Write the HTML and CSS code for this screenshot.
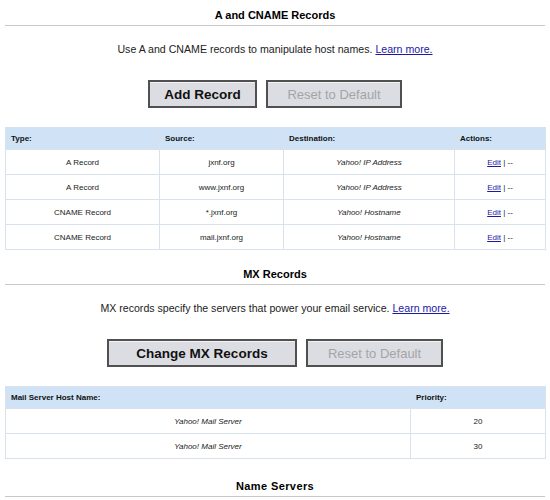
FILE: index.html
```html
<!DOCTYPE html>
<html lang="en">
<head>
  <meta charset="UTF-8">
  <title>DNS Records</title>
  <link rel="stylesheet" href="styles.css">
</head>
<body>
  <div class="pagina">
    <div class="secao">
      <h2>A and CNAME Records</h2>
      <p class="descricao">Use A and CNAME records to manipulate host names. <a href="#">Learn more.</a></p>
      <div class="botoes">
        <button type="button" class="botao principal add">Add Record</button>
        <button type="button" class="botao desativado reset1" disabled>Reset to Default</button>
      </div>
      <table class="registros">
        <colgroup>
          <col style="width:154px"><col style="width:124px"><col style="width:171px"><col style="width:91px">
        </colgroup>
        <tr>
          <th>Type:</th><th>Source:</th><th>Destination:</th><th>Actions:</th>
        </tr>
        <tr>
          <td>A Record</td><td>jxnf.org</td><td class="destino">Yahoo! IP Address</td><td><a href="#">Edit</a> | --</td>
        </tr>
        <tr>
          <td>A Record</td><td>www.jxnf.org</td><td class="destino">Yahoo! IP Address</td><td><a href="#">Edit</a> | --</td>
        </tr>
        <tr>
          <td>CNAME Record</td><td>*.jxnf.org</td><td class="destino">Yahoo! Hostname</td><td><a href="#">Edit</a> | --</td>
        </tr>
        <tr>
          <td>CNAME Record</td><td>mail.jxnf.org</td><td class="destino">Yahoo! Hostname</td><td><a href="#">Edit</a> | --</td>
        </tr>
      </table>
    </div>

    <div class="secao">
      <h2>MX Records</h2>
      <p class="descricao">MX records specify the servers that power your email service. <a href="#">Learn more.</a></p>
      <div class="botoes">
        <button type="button" class="botao principal mx">Change MX Records</button>
        <button type="button" class="botao desativado reset2" disabled>Reset to Default</button>
      </div>
      <table class="registros">
        <colgroup>
          <col style="width:405px"><col style="width:135px">
        </colgroup>
        <tr>
          <th>Mail Server Host Name:</th><th>Priority:</th>
        </tr>
        <tr>
          <td class="destino">Yahoo! Mail Server</td><td>20</td>
        </tr>
        <tr>
          <td class="destino">Yahoo! Mail Server</td><td>30</td>
        </tr>
      </table>
    </div>

    <div class="secao ultima">
      <h2 class="espacado">Name Servers</h2>
    </div>
  </div>
</body>
</html>
```

FILE: styles.css
```css
body {
  margin: 0;
  padding: 0;
  background-color: #fff;
  font-family: "Liberation Sans", Arial, sans-serif;
  color: #000;
}

.pagina {
  padding: 0 5px;
}

.secao {
  margin-top: 17px;
}

.secao:first-child {
  margin-top: 0;
}

.secao.ultima {
  margin-top: 20px;
}

h2 {
  margin: 0;
  padding: 8px 0 3px 0;
  font-size: 11px;
  line-height: 14px;
  font-weight: bold;
  text-align: center;
  border-bottom: 1px solid #c8c8c8;
}

.secao + .secao h2 {
  padding-top: 0;
}

.espacado {
  letter-spacing: 0.4px;
}

.descricao {
  margin: 16px 0 0 0;
  font-size: 10.6px;
  line-height: 14px;
  text-align: center;
  color: #222;
}

a {
  color: #1a1aa6;
  text-decoration: underline;
}

.botoes {
  display: flex;
  justify-content: center;
  gap: 9px;
  margin-top: 24px;
}

.botao {
  height: 28px;
  padding: 0;
  border: 2px solid #505050;
  background-color: #dcdde2;
  box-shadow: inset 0 1px 0 #f2f2f4;
  font-family: "Liberation Sans", Arial, sans-serif;
  font-size: 13px;
}

.principal {
  font-weight: bold;
  font-size: 13.5px;
  color: #111;
}

.desativado {
  color: #a4a4a8;
}

.add { width: 109px; }
.reset1 { width: 136px; }
.mx { width: 190px; }
.reset2 { width: 137px; }

.registros {
  width: 540px;
  margin-top: 19px;
  border-collapse: collapse;
  table-layout: fixed;
  font-size: 8px;
}

.registros th {
  height: 21px;
  padding: 0 5px;
  background-color: #d0e3f6;
  border: 1px solid #d8e2ec;
  text-align: left;
  font-weight: bold;
  color: #111;
}

.registros td {
  height: 24px;
  padding: 0 4px;
  border: 1px solid #d8e2ec;
  text-align: center;
  color: #222;
}

.destino {
  font-style: italic;
}
```
